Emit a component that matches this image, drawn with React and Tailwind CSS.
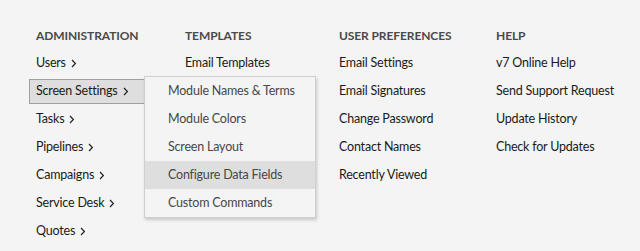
import React from "react";

const Chev = () => (
  <svg width="6" height="9" viewBox="0 0 6 9" className="ml-[5px] mt-[1px]" fill="none">
    <path d="M1 1 L4.4 4.5 L1 8" stroke="#222" strokeWidth="1.2" />
  </svg>
);

const Item = ({ children, chev, active }) => (
  <div className="h-[28px] flex items-center">
    <div
      className={
        "ml-[-7px] h-[25px] flex items-center pl-[6px] pr-[17px] border whitespace-nowrap " +
        (active ? "border-[#a0a0a0] bg-[#dedede]" : "border-transparent")
      }
    >
      <span>{children}</span>
      {chev && <Chev />}
    </div>
  </div>
);

const Header = ({ children }) => (
  <div className="h-[28px] flex items-center pt-[1px] font-bold text-[#4a4a4a] text-[12px] tracking-[-0.1px] whitespace-nowrap">
    {children}
  </div>
);

export default function App() {
  return (
    <div
      className="relative w-[640px] h-[251px] bg-[#f4f4f4] text-[#1a1a1a] text-[12.5px] tracking-[-0.2px] overflow-hidden"
      style={{ fontFamily: 'Lato, "Noto Sans", sans-serif' }}
    >
      <div className="grid grid-cols-[149px_154px_157px_1fr] pl-[36px] pt-[21px]">
        <div>
          <Header>ADMINISTRATION</Header>
          <Item chev>Users</Item>
          <Item chev active>Screen Settings</Item>
          <Item chev>Tasks</Item>
          <Item chev>Pipelines</Item>
          <Item chev>Campaigns</Item>
          <Item chev>Service Desk</Item>
          <Item chev>Quotes</Item>
        </div>
        <div>
          <Header>TEMPLATES</Header>
          <Item>Email Templates</Item>
        </div>
        <div>
          <Header>USER PREFERENCES</Header>
          <Item>Email Settings</Item>
          <Item>Email Signatures</Item>
          <Item>Change Password</Item>
          <Item>Contact Names</Item>
          <Item>Recently Viewed</Item>
        </div>
        <div>
          <Header>HELP</Header>
          <Item>v7 Online Help</Item>
          <Item>Send Support Request</Item>
          <Item>Update History</Item>
          <Item>Check for Updates</Item>
        </div>
      </div>
      <div className="absolute left-[144px] top-[76px] w-[172px] bg-[#f4f4f4] border border-[#cfcfcf] shadow-[1px_2px_3px_rgba(0,0,0,0.18)] text-[#474747]">
        {["Module Names & Terms", "Module Colors", "Screen Layout", "Configure Data Fields", "Custom Commands"].map((t, i) => (
          <div
            key={t}
            className={"h-[28px] flex items-center pl-[23px] whitespace-nowrap " + (i === 3 ? "bg-[#dedede]" : "")}
          >
            {t}
          </div>
        ))}
      </div>
    </div>
  );
}
